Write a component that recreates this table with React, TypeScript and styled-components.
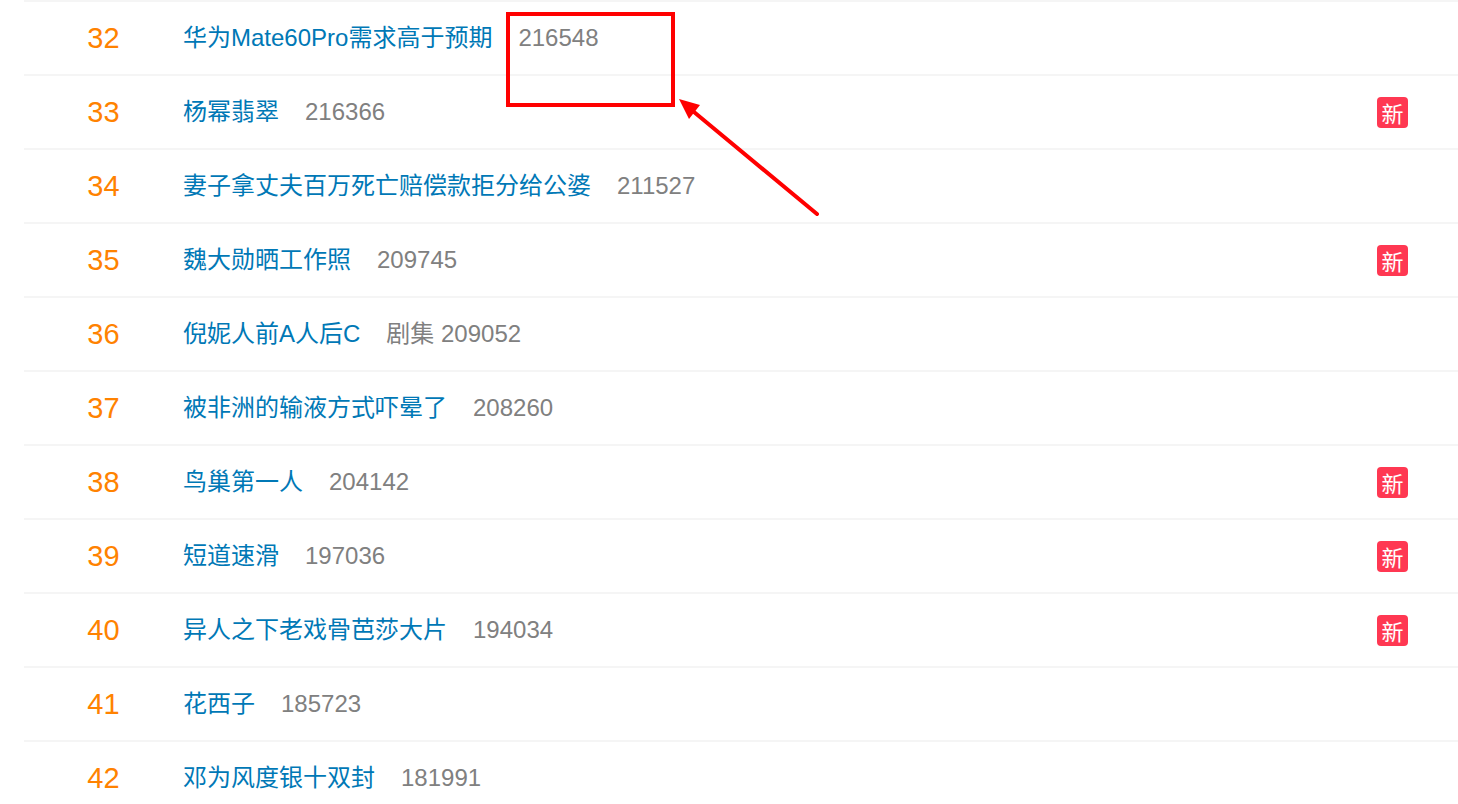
import React from "react";
import styled, { createGlobalStyle } from "styled-components";

const Global = createGlobalStyle`
  html, body { margin: 0; padding: 0; background: #fff; }
  body { font-family: "Liberation Sans", "Noto Sans CJK SC", sans-serif; }
`;

const Page = styled.div`
  position: relative;
  padding-left: 24px;
  height: 804px;
  overflow: hidden;
`;

const List = styled.div`
  display: flex;
  flex-direction: column;
  border-top: 2px solid #f5f5f5;
`;

const Row = styled.div`
  display: flex;
  align-items: center;
  height: 72px;
  border-bottom: 2px solid #f5f5f5;
`;

const Rank = styled.div`
  width: 159px;
  text-align: center;
  font-size: 29px;
  color: #ff8200;
`;

const Line = styled.div`
  display: flex;
  align-items: baseline;
  line-height: 30px;
  margin-top: -1px;
  white-space: nowrap;
`;

const Title = styled.span`
  font-size: 24px;
  color: #0078b6;
`;

const Count = styled.span`
  margin-left: 26px;
  font-size: 24px;
  color: #808080;
`;

const Spacer = styled.div`
  flex: 1;
`;

const Badge = styled.span`
  width: 31px;
  height: 31px;
  margin-right: 50px;
  border-radius: 4px;
  background: #ff3852;
  color: #fff;
  font-size: 22px;
  display: flex;
  align-items: center;
  justify-content: center;
`;

const Overlay = styled.svg`
  position: absolute;
  left: 0;
  top: 0;
  pointer-events: none;
`;

type Item = { rank: number; title: string; count: string; isNew?: boolean };

const items: Item[] = [
  { rank: 32, title: "华为Mate60Pro需求高于预期", count: "216548" },
  { rank: 33, title: "杨幂翡翠", count: "216366", isNew: true },
  { rank: 34, title: "妻子拿丈夫百万死亡赔偿款拒分给公婆", count: "211527" },
  { rank: 35, title: "魏大勋晒工作照", count: "209745", isNew: true },
  { rank: 36, title: "倪妮人前A人后C", count: "剧集 209052" },
  { rank: 37, title: "被非洲的输液方式吓晕了", count: "208260" },
  { rank: 38, title: "鸟巢第一人", count: "204142", isNew: true },
  { rank: 39, title: "短道速滑", count: "197036", isNew: true },
  { rank: 40, title: "异人之下老戏骨芭莎大片", count: "194034", isNew: true },
  { rank: 41, title: "花西子", count: "185723" },
  { rank: 42, title: "邓为风度银十双封", count: "181991" },
];

export default function App() {
  return (
    <>
      <Global />
      <Page>
        <List>
          {items.map((it) => (
            <Row key={it.rank}>
              <Rank>{it.rank}</Rank>
              <Line>
                <Title>{it.title}</Title>
                <Count>{it.count}</Count>
              </Line>
              <Spacer />
              {it.isNew && <Badge>新</Badge>}
            </Row>
          ))}
        </List>
        <Overlay width="1458" height="804" viewBox="0 0 1458 804">
          <rect x="508" y="14" width="165" height="91" fill="none" stroke="#ff0000" strokeWidth="4" />
          <line x1="817" y1="214" x2="694" y2="112" stroke="#ff0000" strokeWidth="4" strokeLinecap="round" />
          <polygon points="679,99 700,105 689,119" fill="#ff0000" />
        </Overlay>
      </Page>
    </>
  );
}
